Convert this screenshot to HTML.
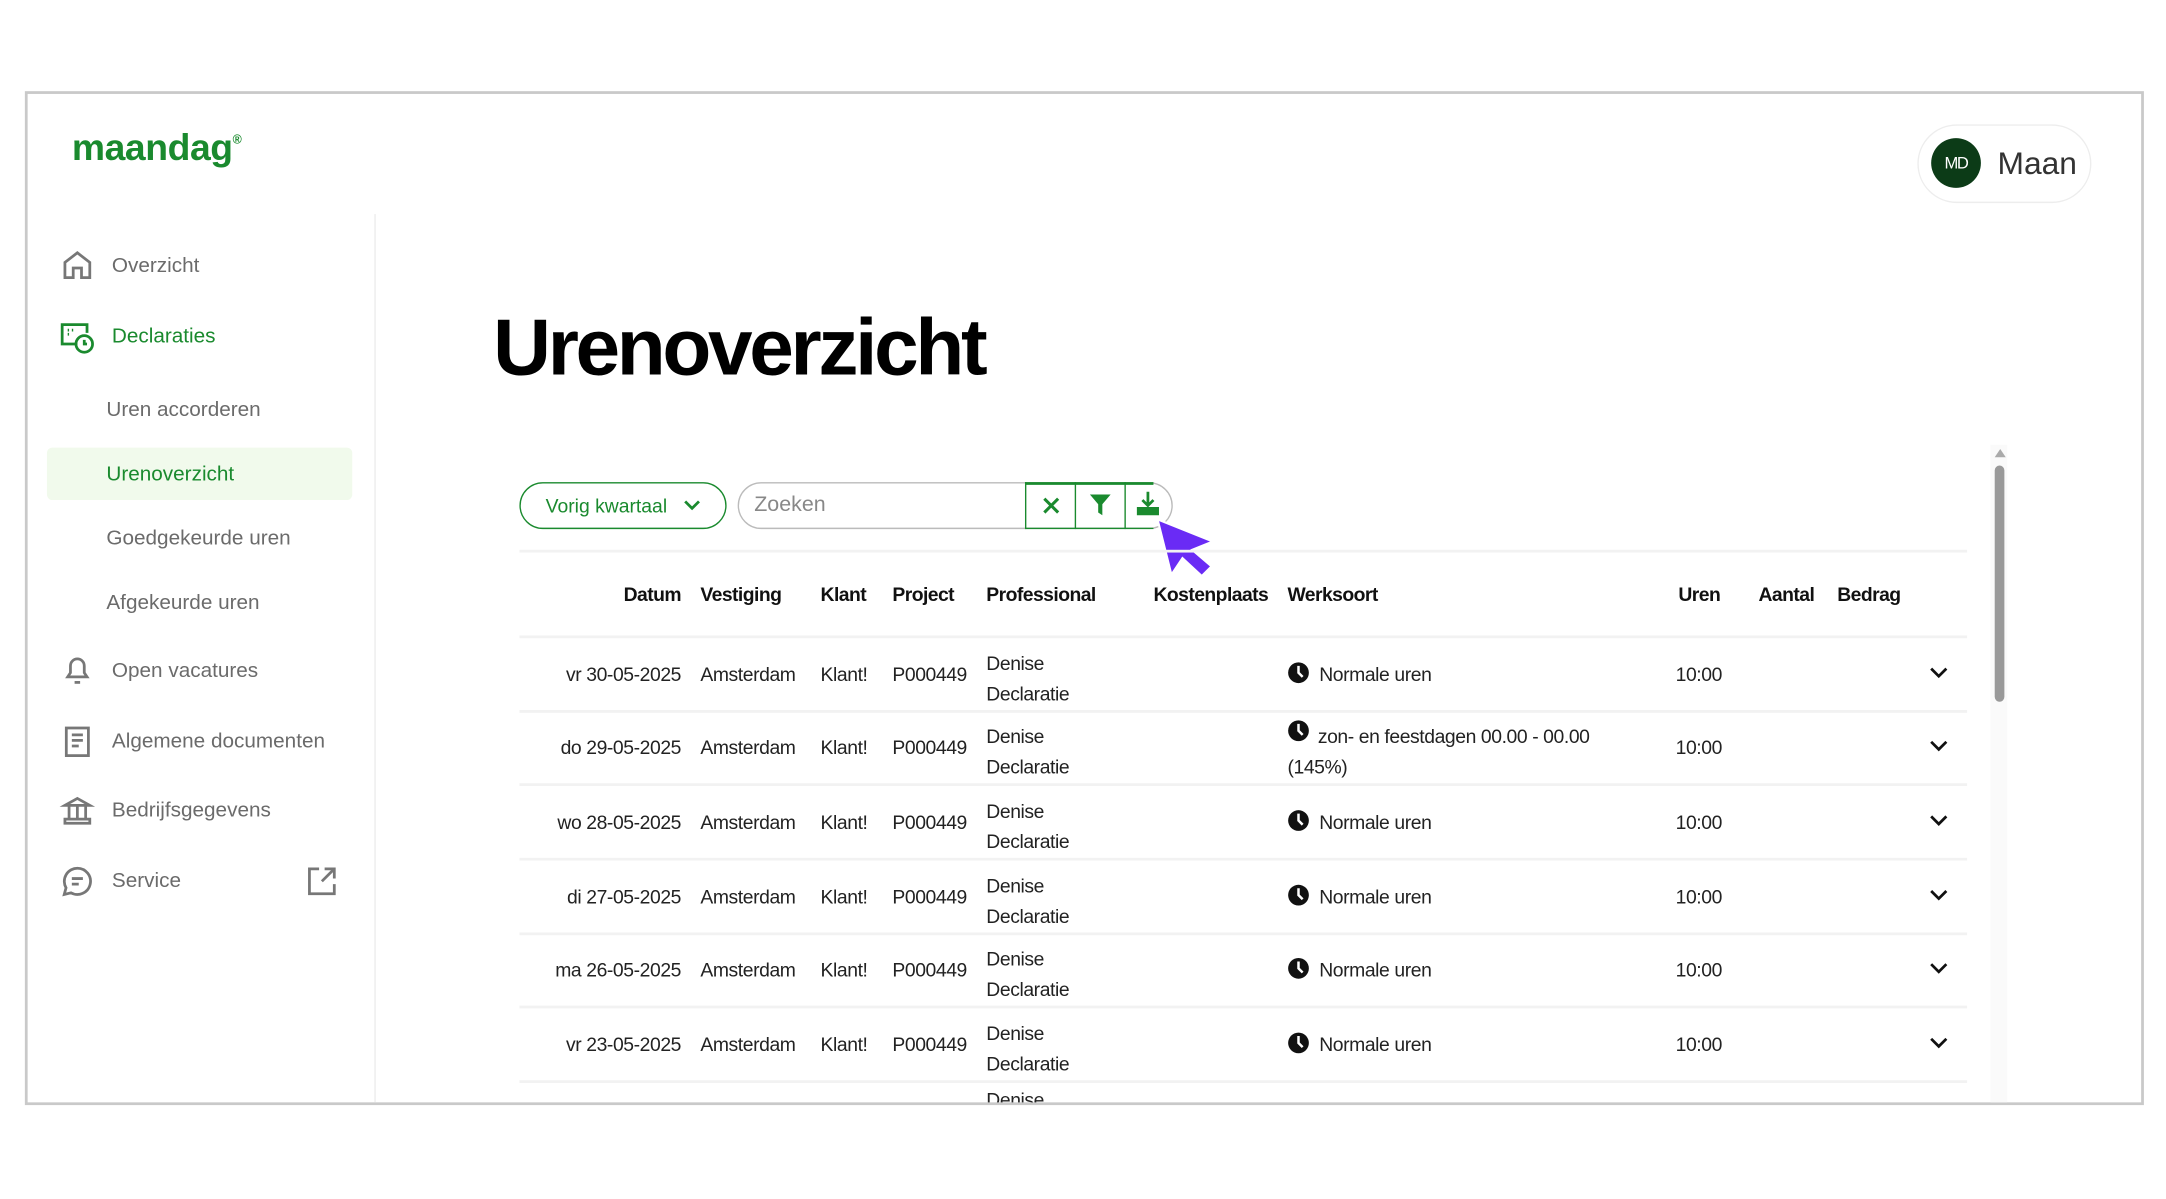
<!DOCTYPE html>
<html><head><meta charset="utf-8"><style>
*{margin:0;padding:0;box-sizing:border-box}
html,body{width:2166px;height:1199px;overflow:hidden;background:#fff}
#s{position:absolute;left:0;top:0;width:1568px;height:868px;transform:scale(1.38138);transform-origin:0 0;font-family:"Liberation Sans",sans-serif}
.a{position:absolute;white-space:nowrap}
.frame{position:absolute;left:18px;top:66px;width:1534px;height:734px;border:2px solid #c9c9c9}
.nav{color:#6b6b6b;font-size:15px;line-height:18px}
.g{color:#1a8a2e}
.th{font-size:14px;letter-spacing:-0.4px;font-weight:bold;color:#111;top:422px}
.td{font-size:14px;letter-spacing:-0.3px;color:#222}
.hl{position:absolute;left:376px;width:1048px;height:2px;background:#f2f2f2}
svg{position:absolute;overflow:visible}
</style></head><body><div id="s">
<div class="frame"></div>
<div class="a g" style="left:52px;top:92px;font-size:27px;font-weight:bold;letter-spacing:-0.3px">maandag<span style="font-size:9px;vertical-align:top;position:relative;top:4px">®</span></div>
<div style="position:absolute;left:271px;top:155px;width:1px;height:643px;background:#ececec"></div>

<svg style="left:45px;top:181px" width="22" height="22" viewBox="0 0 22 22" fill="none" stroke="#777" stroke-width="2"><path d="M2 20V9L11 2l9 7v11h-6v-7H8v7z"/></svg>
<div class="a nav" style="left:81px;top:184px">Overzicht</div>
<svg style="left:43px;top:233px" width="26" height="24" viewBox="0 0 26 24" fill="none" stroke="#1a8a2e" stroke-width="2"><path d="M13 16H2V2h18v6"/><circle cx="18" cy="16" r="6"/><path d="M18 13v3h2"/><path d="M6 6h1M9 6h1M6 9h1" /></svg>
<div class="a nav g" style="left:81px;top:235px">Declaraties</div>
<div class="a nav" style="left:77px;top:288px">Uren accorderen</div>
<div style="position:absolute;left:34px;top:324px;width:221px;height:38px;background:#f1faec;border-radius:4px"></div>
<div class="a nav g" style="left:77px;top:335px">Urenoverzicht</div>
<div class="a nav" style="left:77px;top:381px">Goedgekeurde uren</div>
<div class="a nav" style="left:77px;top:428px">Afgekeurde uren</div>
<svg style="left:46px;top:474px" width="20" height="22" viewBox="0 0 20 22" fill="none" stroke="#777" stroke-width="2"><path d="M3 16h14l-2-3V8a5 5 0 0 0-10 0v5z"/><path d="M8 20h4"/></svg>
<div class="a nav" style="left:81px;top:477px">Open vacatures</div>
<svg style="left:47px;top:526px" width="18" height="22" viewBox="0 0 18 22" fill="none" stroke="#777" stroke-width="2"><rect x="1" y="1" width="16" height="20"/><path d="M5 6h8M5 10h8M5 14h5"/></svg>
<div class="a nav" style="left:81px;top:528px">Algemene documenten</div>
<svg style="left:45px;top:576px" width="22" height="22" viewBox="0 0 22 22" fill="none" stroke="#777" stroke-width="2"><path d="M2 7L11 2l9 5zM2 7h18M5 8v9M11 8v9M17 8v9M2 20h18v-3H2z"/></svg>
<div class="a nav" style="left:81px;top:578px">Bedrijfsgegevens</div>
<svg style="left:45px;top:627px" width="22" height="22" viewBox="0 0 22 22" fill="none" stroke="#777" stroke-width="2"><path d="M11 1.5a9.5 9.5 0 1 1-4.6 17.8L1.5 20.5l1.3-4.8A9.5 9.5 0 0 1 11 1.5z"/><path d="M7 9h8M7 13h5"/></svg>
<div class="a nav" style="left:81px;top:629px">Service</div>
<svg style="left:223px;top:628px" width="20" height="20" viewBox="0 0 20 20" fill="none" stroke="#777" stroke-width="2"><path d="M8 1H1v18h18v-7M12 1h7v7M19 1l-9 9"/></svg>

<div style="position:absolute;left:1388px;top:90px;width:126px;height:57px;border:1px solid #ededed;border-radius:29px"></div>
<div style="position:absolute;left:1398px;top:100px;width:36px;height:36px;border-radius:50%;background:#0c3b17;color:#fff;font-size:12px;line-height:36px;text-align:center;letter-spacing:-1px">MD</div>
<div class="a" style="left:1446px;top:105px;font-size:23px;color:#333">Maan</div>

<div class="a" style="left:357px;top:218px;font-size:58px;font-weight:bold;letter-spacing:-2.4px;color:#000">Urenoverzicht</div>

<div style="position:absolute;left:376px;top:349px;width:150px;height:34px;border:1.5px solid #1a8a2e;border-radius:17px"></div>
<div class="a g" style="left:395px;top:358px;font-size:14px">Vorig kwartaal</div>
<svg style="left:495px;top:361px" width="12" height="10" viewBox="0 0 12 10" fill="none" stroke="#1a8a2e" stroke-width="2"><path d="M1 2l5 5 5-5"/></svg>
<div style="position:absolute;left:534px;top:349px;width:315px;height:34px;border:1.5px solid #bbb;border-radius:17px"></div>
<div class="a" style="left:546px;top:357px;font-size:15.5px;color:#888">Zoeken</div>
<div style="position:absolute;left:742px;top:349px;width:1px;height:34px;background:#1a8a2e"></div>
<div style="position:absolute;left:778px;top:349px;width:1px;height:34px;background:#1a8a2e"></div>
<div style="position:absolute;left:814px;top:349px;width:1px;height:34px;background:#1a8a2e"></div>
<div style="position:absolute;left:742px;top:349px;width:93px;height:1.5px;background:#1a8a2e"></div>
<div style="position:absolute;left:742px;top:381.5px;width:93px;height:1.5px;background:#1a8a2e"></div>
<svg style="left:755px;top:360px" width="12" height="12" viewBox="0 0 12 12" stroke="#1a8a2e" stroke-width="2.2"><path d="M1 1l10 10M11 1L1 11"/></svg>
<svg style="left:789px;top:358px" width="15" height="15" viewBox="0 0 15 15" fill="#1a8a2e"><path d="M0 0h15L9 7v8L6 13V7z"/></svg>
<svg style="left:823px;top:356px" width="16" height="17" viewBox="0 0 16 17" fill="none" stroke="#1a8a2e" stroke-width="2"><path d="M8 0v9M4 6l4 4 4-4"/><path d="M1 11v5h14v-5" fill="#1a8a2e"/></svg>
<svg style="left:836px;top:374px" width="46" height="44" viewBox="0 0 46 44"><path d="M2 2L12 42 20 30 34 43 41 36 27 24 42 18z" fill="#6a2bf5" stroke="#fff" stroke-width="1.5"/></svg>

<div class="hl" style="top:398px"></div>
<div class="a th" style="left:440px;width:53px;text-align:right">Datum</div>
<div class="a th" style="left:507px">Vestiging</div>
<div class="a th" style="left:594px">Klant</div>
<div class="a th" style="left:646px">Project</div>
<div class="a th" style="left:714px">Professional</div>
<div class="a th" style="left:835px">Kostenplaats</div>
<div class="a th" style="left:932px">Werksoort</div>
<div class="a th" style="left:1215px">Uren</div>
<div class="a th" style="left:1273px">Aantal</div>
<div class="a th" style="left:1330px">Bedrag</div>
<div class="hl" style="top:460px"></div>

<div id="rows"></div>
<script>
var d=[["vr 30-05-2025",488,"Normale uren"],["do 29-05-2025",541,"z"],["wo 28-05-2025",595,"Normale uren"],["di 27-05-2025",649,"Normale uren"],["ma 26-05-2025",702,"Normale uren"],["vr 23-05-2025",756,"Normale uren"]];
var h="";
d.forEach(function(r){var y=r[1];var t=y-8;
h+='<div class="a td" style="left:380px;width:113px;text-align:right;top:'+t+'px">'+r[0]+'</div>';
h+='<div class="a td" style="left:507px;top:'+t+'px">Amsterdam</div><div class="a td" style="left:594px;top:'+t+'px">Klant!</div><div class="a td" style="left:646px;top:'+t+'px">P000449</div>';
h+='<div class="a td" style="left:714px;top:'+(t-11)+'px;line-height:22px">Denise<br>Declaratie</div>';
var cy=(r[2]=="z")?y-12:y-1;
h+='<svg style="left:932px;top:'+(cy-8)+'px" width="16" height="16" viewBox="0 0 16 16"><circle cx="8" cy="8" r="7.5" fill="#111"/><path d="M8 3v5l3 3" stroke="#fff" stroke-width="1.8" fill="none"/></svg>';
if(r[2]=="z")h+='<div class="a td" style="left:932px;top:'+(t-11)+'px;line-height:22px"><span style="padding-left:22px">zon- en feestdagen 00.00 - 00.00</span><br>(145%)</div>';
else h+='<div class="a td" style="left:955px;top:'+t+'px">'+r[2]+'</div>';
h+='<div class="a td" style="left:1213px;top:'+t+'px">10:00</div>';
h+='<svg style="left:1397px;top:'+(y-5)+'px" width="13" height="9" viewBox="0 0 13 9" fill="none" stroke="#111" stroke-width="2"><path d="M1 1l5.5 5.5L12 1"/></svg>';
h+='<div class="hl" style="top:'+(y+26)+'px"></div>';});
h+='<div class="a td" style="left:714px;top:788px;height:10px;overflow:hidden">Denise</div>';
document.getElementById("rows").innerHTML=h;
</script>
<div style="position:absolute;left:1441px;top:322px;width:12px;height:476px;background:#fafafa"></div>
<svg style="left:1444px;top:325px" width="8" height="6" viewBox="0 0 8 6"><path d="M4 0l4 6H0z" fill="#aaa"/></svg>
<div style="position:absolute;left:1444px;top:337px;width:7px;height:171px;background:#999;border-radius:4px"></div>
</div></body></html>
